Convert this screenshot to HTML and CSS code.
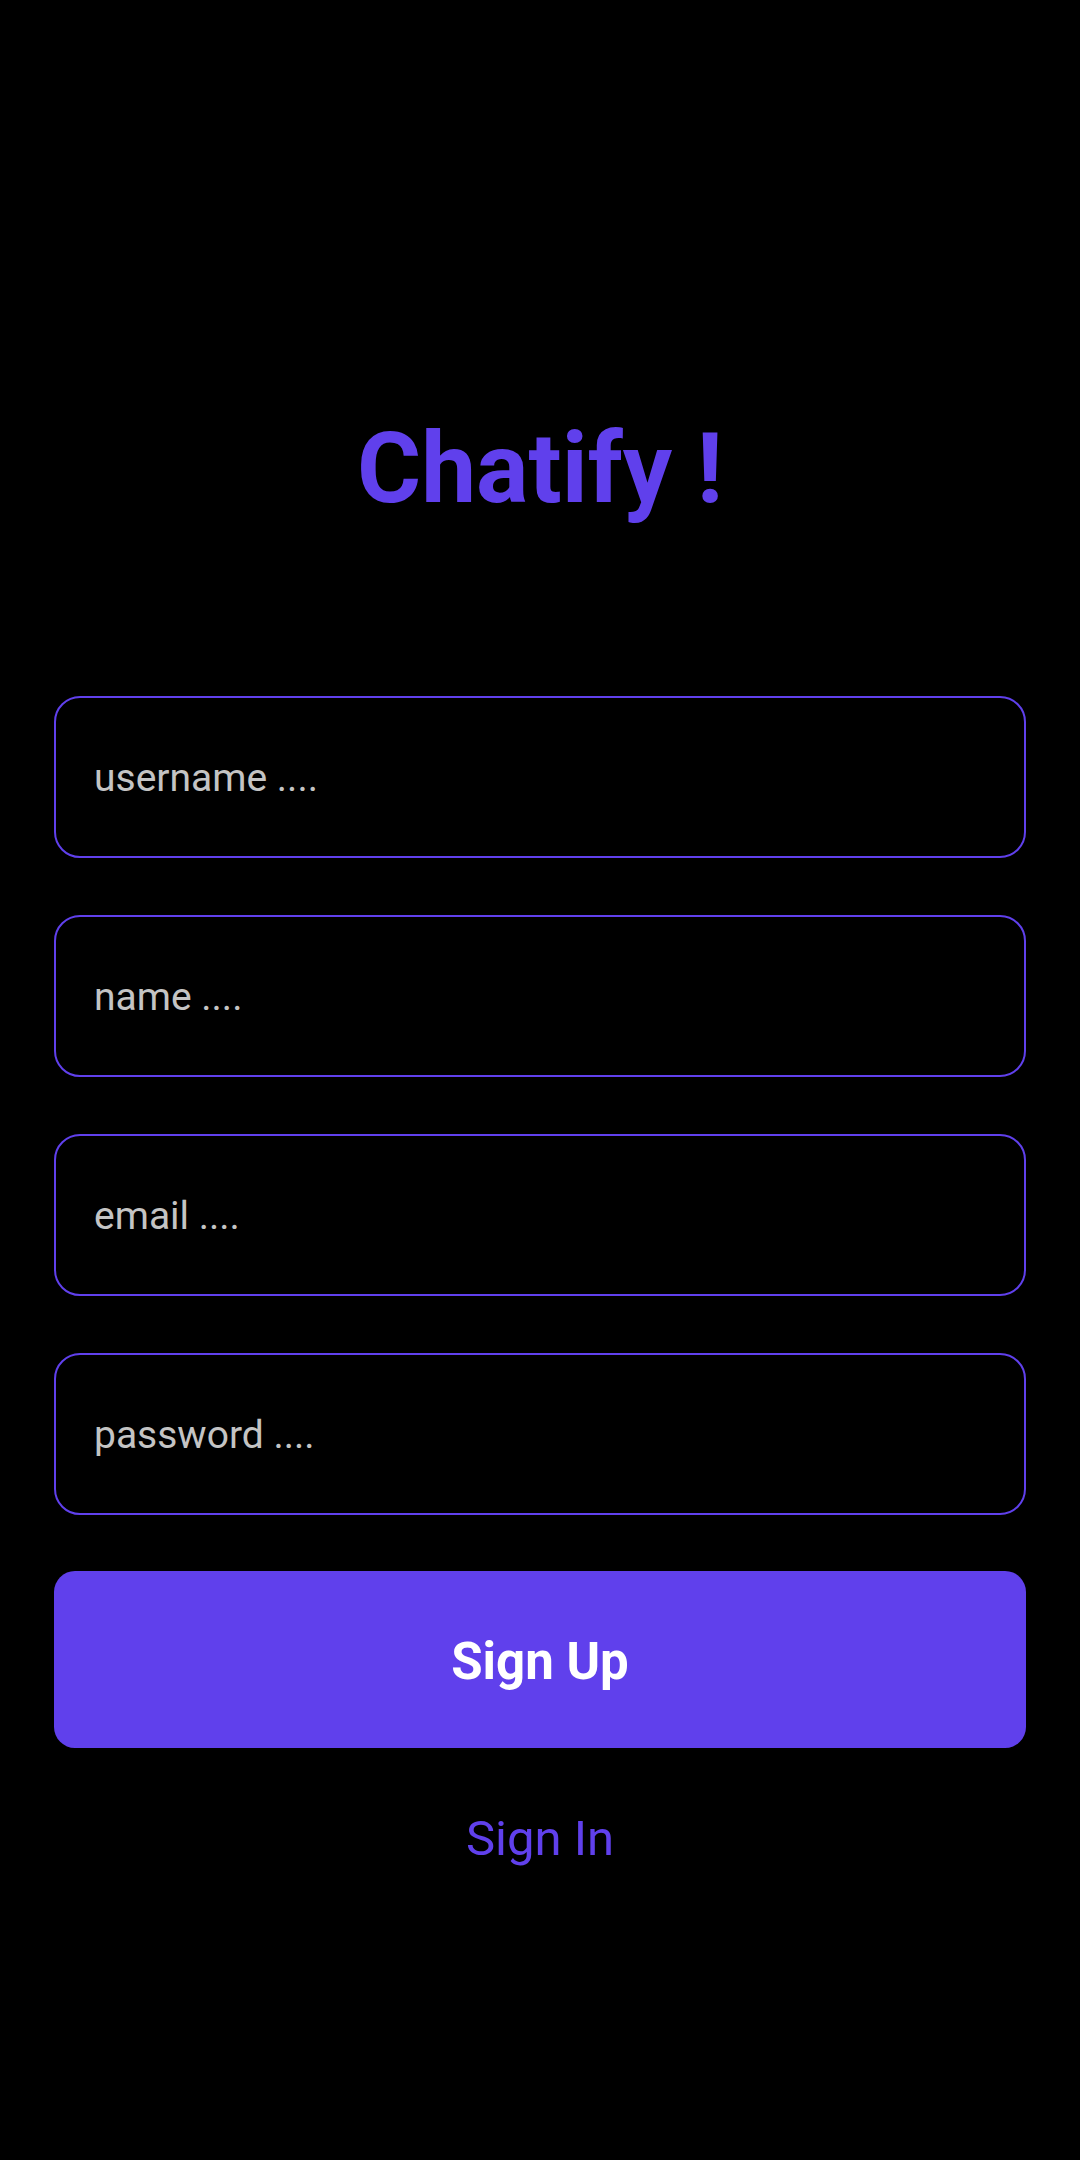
FILE: index.html
```html
<!DOCTYPE html>
<html lang="en">
<head>
<meta charset="utf-8">
<title>Chatify - Sign Up</title>
<link rel="stylesheet" href="styles.css">
</head>
<body>
<main class="screen">
  <h1 class="title">Chatify !</h1>
  <form class="form">
    <input class="field" type="text" placeholder="username ....">
    <input class="field" type="text" placeholder="name ....">
    <input class="field" type="email" placeholder="email ....">
    <input class="field" type="password" placeholder="password ....">
    <button class="primary" type="button">Sign Up</button>
  </form>
  <a class="link" href="#">Sign In</a>
</main>
</body>
</html>
```
FILE: styles.css
```css
html, body {
  margin: 0;
  padding: 0;
  background: #000;
}
body {
  width: 1080px;
  height: 2160px;
  font-family: Roboto, "Liberation Sans", sans-serif;
}
.screen {
  display: flex;
  flex-direction: column;
  align-items: center;
  padding: 420px 54px 0;
}
.title {
  margin: 0;
  font-size: 98px;
  line-height: 1;
  font-weight: 700;
  color: #6040ec;
}
.form {
  display: flex;
  flex-direction: column;
  gap: 57px;
  width: 972px;
  margin-top: 178px;
}
.field {
  box-sizing: border-box;
  width: 100%;
  height: 162px;
  margin: 0;
  padding: 2px 38px 0;
  border: 2px solid #6040ec;
  border-radius: 26px;
  background: #000;
  color: #e0e0e0;
  font-family: Roboto, "Liberation Sans", sans-serif;
  font-size: 39px;
  outline: none;
}
.field::placeholder {
  color: #c4c4c4;
  opacity: 1;
}
.primary {
  height: 177px;
  margin-top: -1px;
  border: none;
  border-radius: 21px;
  background: #6040ec;
  color: #fff;
  font-family: Roboto, "Liberation Sans", sans-serif;
  font-size: 51px;
  font-weight: 700;
  padding: 4px 0 0;
}
.link {
  margin-top: 66px;
  font-size: 49px;
  line-height: 1;
  color: #6040ec;
  text-decoration: none;
}
```
